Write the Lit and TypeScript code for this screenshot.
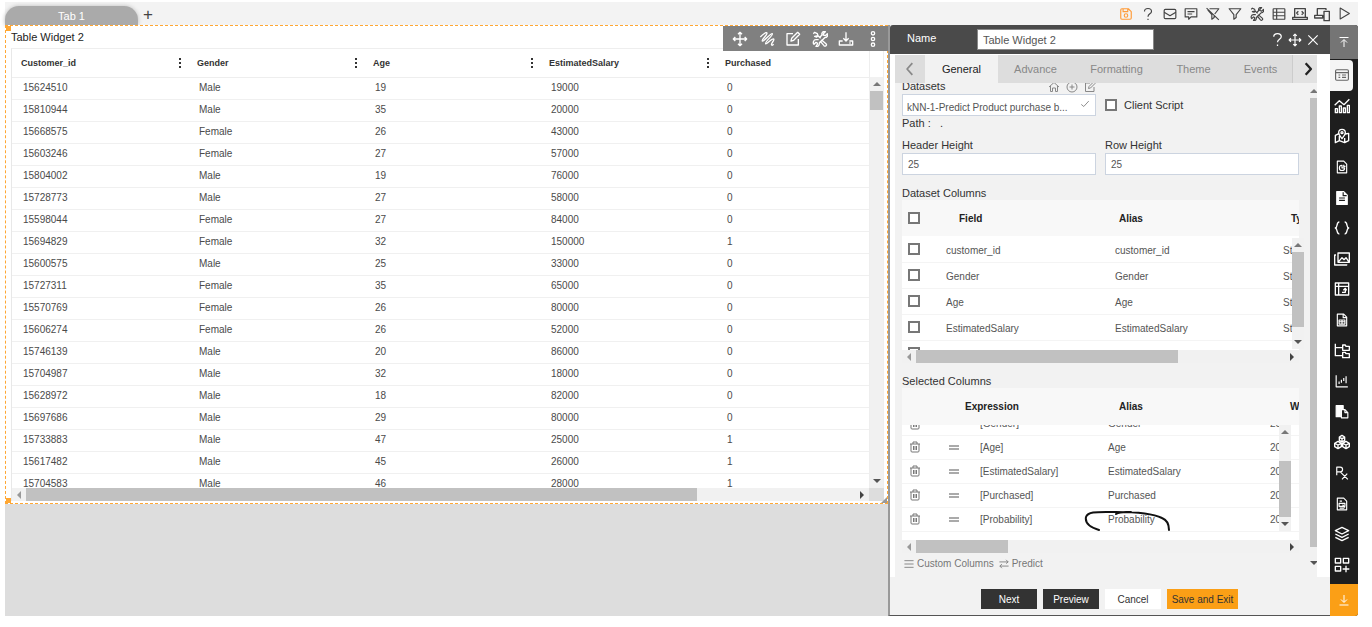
import { LitElement, html, css, svg, nothing, type TemplateResult } from "lit";
import { customElement } from "lit/decorators.js";
import { classMap } from "lit/directives/class-map.js";

type Row = [string, string, string, string, string];

const COLUMNS = ["Customer_id", "Gender", "Age", "EstimatedSalary", "Purchased"];

const ROWS: Row[] = [
  ["15624510", "Male", "19", "19000", "0"],
  ["15810944", "Male", "35", "20000", "0"],
  ["15668575", "Female", "26", "43000", "0"],
  ["15603246", "Female", "27", "57000", "0"],
  ["15804002", "Male", "19", "76000", "0"],
  ["15728773", "Male", "27", "58000", "0"],
  ["15598044", "Female", "27", "84000", "0"],
  ["15694829", "Female", "32", "150000", "1"],
  ["15600575", "Male", "25", "33000", "0"],
  ["15727311", "Female", "35", "65000", "0"],
  ["15570769", "Female", "26", "80000", "0"],
  ["15606274", "Female", "26", "52000", "0"],
  ["15746139", "Male", "20", "86000", "0"],
  ["15704987", "Male", "32", "18000", "0"],
  ["15628972", "Male", "18", "82000", "0"],
  ["15697686", "Male", "29", "80000", "0"],
  ["15733883", "Male", "47", "25000", "1"],
  ["15617482", "Male", "45", "26000", "1"],
  ["15704583", "Male", "46", "28000", "1"],
];

const ICONS: Record<string, TemplateResult> = {
  save: svg`<path d="M3 5a2 2 0 0 1 2-2h11l5 5v11a2 2 0 0 1-2 2H5a2 2 0 0 1-2-2zM7 3v5h8V3"/><circle cx="12" cy="14.5" r="3"/>`,
  help: svg`<path d="M6 7.5C6 4 8.500 2.500 12 2.500s6 1.800 6 5c0 4-6 4.500-6 9M12 20v2.200"/>`,
  mail: svg`<rect x="2" y="4" width="20" height="16" rx="2"/><path d="M2 9l10 6 10-6"/>`,
  comment: svg`<path d="M2 3h20v14H12l-4 4v-4H2zM6 8h12M6 12h8"/>`,
  filterOff: svg`<path d="M1 2l21 20M6 3h16l-7 9M3 5l7 8v8l4-3v-4"/>`,
  filter: svg`<path d="M2 3h20l-8 10v5l-4 3v-8z"/>`,
  tools: svg`<path d="M2 4l2-2 4 2 1 3 4 4M14 13l7 6c1 1 1 2 0 3s-2 1-3 0l-6-7M9 7L7 9 4 8zM10 13l-4 0c-4 0-5 5-3 7l3-3 2 1 0 2-2 3c4 1 5-2 5-5l8-8c4 0 5-3 4-6l-3 3-3-1 0-2 3-3c-4-1-6 2-5 5l-3 3"/>`,
  grid: svg`<rect x="2" y="3" width="20" height="18" rx="1"/><path d="M2 9h20M2 15h20M8 3v18"/>`,
  code: svg`<path d="M4 17V4h16v13M1 17h22v3H1zM9.500 8L7 10.500 9.500 13M14.500 8l2.500 2.500-2.500 2.500"/>`,
  devices: svg`<path d="M5 14V4h13v2M1 14h12v4H1zM15 8h8v14h-8z"/>`,
  play: svg`<path d="M4 2l17 10-17 10z"/>`,
  move: svg`<path d="M12 2v20M2 12h20M9 5l3-3 3 3M9 19l3 3 3-3M5 9l-3 3 3 3M19 9l3 3-3 3"/>`,
  squiggle: svg`<path d="M2 9C6 5 11 1 12 3c1 3-9 10-7 12S18 2 20 4 8 17 10 19s9-9 12-7c2 2-5 7-3 9 1 1 2 0 3-1"/>`,
  edit: svg`<path d="M12 4H3v17h17v-9M9 15l1-4 9-9 3 3-9 9z"/>`,
  download: svg`<path d="M12 2v13M8 11l4 4 4-4M7 15H2v6h20v-6h-5M17 18h2"/>`,
  more: svg`<circle cx="12" cy="3.5" r="2.500"/><circle cx="12" cy="12" r="2.500"/><circle cx="12" cy="20.5" r="2.500"/>`,
  close: svg`<path d="M4 4l16 16M20 4L4 20"/>`,
  toTop: svg`<path d="M3 3h18M12 22V8M6 13l6-6 6 6"/>`,
  toBottom: svg`<path d="M3 22h18M12 2v14M6 11l6 6 6-6"/>`,
  prev: svg`<path d="M16 2L7 12l9 10"/>`,
  next: svg`<path d="M8 2l9 10-9 10"/>`,
  home: svg`<path d="M2 12L12 3l10 9M5 10v11h4v-7h6v7h4V10"/>`,
  plus: svg`<circle cx="12" cy="12" r="10"/><path d="M12 7v10M7 12h10"/>`,
  check: svg`<path d="M3 13l6 5L21 5"/>`,
  menu: svg`<path d="M1 4h22M1 12h22M1 20h22"/>`,
  swap: svg`<path d="M1 7h21M17 2l5 5-5 4M23 17H2M7 12l-5 5 5 5"/>`,
  trash: svg`<path d="M2 6h20M8 6V2h8v4M4 6v14q0 2 2 2h12q2 0 2-2V6M9 10v8M12 10v8M15 10v8"/>`,
  form: svg`<rect x="1" y="3" width="22" height="18" rx="2"/><path d="M1 8h22M6 12h3M12 12h7M6 16h3M12 16h7"/>`,
  chart: svg`<path d="M2 22v-6h3v6zM8 22V12h3v10zM14 22v-7h3v7zM20 22V11h3v11zM1 11l7-7 7 6 8-8"/>`,
  map: svg`<path d="M8 8l-6 3v11l6-3 8 3 6-3V8l-5 1M8 12v7M16 15v7M12 16c-3-4-5-6-5-9a5 5 0 0 1 10 0c0 3-2 5-5 9z"/><circle cx="12" cy="7" r="1.500"/>`,
  fileChart: svg`<path d="M4 2h11l5 5v15H4z"/><path d="M12 9a4.500 4.500 0 1 0 4.500 4.500H12z"/><path d="M15 8v3h3"/>`,
  doc: svg`<path class="solid" d="M3 1h12l6 6v16H3z"/><path class="ink" d="M14 2v6h6M7 12h10M7 16h10"/>`,
  braces: svg`<path d="M8 3C3 3 6 11 2 12c4 1 1 9 6 9M16 3c5 0 2 8 6 9-4 1-1 9-6 9"/>`,
  images: svg`<path d="M6 3h17v14H6zM3 6H1v15h18v-1M7 16l5-6 3 3 3-3 4 6"/>`,
  pivot: svg`<path d="M2 3h20v18H2zM2 8h20M7 3v18M12 17h5v-5M14 14l3-3 2 3"/>`,
  report: svg`<path d="M4 2h11l5 5v15H4zM14 2v6h6M7 12h10v7H7zM7 15h10M12 12v7"/>`,
  tree: svg`<path d="M2 1v18h11M2 7h11M13 3h4l1 2h5v6H13zM13 14h4l1 2h5v6H13z"/>`,
  candles: svg`<path d="M2 2v20h20M7 17v-4M11 15v-5M15 12V7M19 16V4"/>`,
  paste: svg`<path class="solid" d="M2 1h12v6h-4v13H2z"/><path d="M11 8h6l5 5v9H11z"/><path d="M17 8v5h5"/>`,
  cubes: svg`<path d="M12 2l4 2.500v5L12 12 8 9.500v-5zM6 11l5 3v5l-5 3-5-3v-5zM18 11l5 3v5l-5 3-5-3v-5zM8 5l4 2 4-2M12 7v5M1 14l5 2.500 5-2.500M6 16.500V22M13 14l5 2.500 5-2.500M18 16.500V22"/>`,
  rx: svg`<path d="M3 16V2h6a4 4 0 0 1 0 8H3M9 10l13 13M21 13l-9 10"/>`,
  fileSearch: svg`<path d="M4 2h11l5 5v15H4zM8 7h4M7 11h10v5H7zM8 19h8M13 13l4 5"/>`,
  layers: svg`<path d="M12 2l10 5-10 5L2 7zM2 12l10 5 10-5M2 17l10 5 10-5"/>`,
  widgets: svg`<path d="M2 2h8v7H2zM14 2h8v7h-8zM2 14h8v7H2zM18 13v10M13 18h10"/>`,
};

const icon = (name: string, size = 14, weight = 2) => html`
  <svg class="icon" viewBox="0 0 24 24" width=${size} height=${size} stroke-width=${weight} aria-hidden="true">
    ${ICONS[name]}
  </svg>
`;

@customElement("scroll-bar")
export class ScrollBar extends LitElement {
  static properties = {
    vertical: { type: Boolean, reflect: true },
    start: { type: Number },
    size: { type: Number },
  };
  declare vertical: boolean;
  declare start: number;
  declare size: number;

  static styles = css`
    :host { display: flex; align-items: center; background: #f1f1f1; height: 13px; box-sizing: border-box; }
    :host([vertical]) { flex-direction: column; height: auto; width: 13px; }
    .arrow { flex: none; width: 14px; display: flex; justify-content: center; }
    :host([vertical]) .arrow { width: auto; height: 14px; align-items: center; }
    .arrow::before { content: ""; border: 4px solid transparent; }
    .back::before { border-left-width: 0; border-right-color: #999; }
    .forward::before { border-right-width: 0; border-left-color: #444; }
    :host([vertical]) .back::before { border: 4px solid transparent; border-top-width: 0; border-bottom-color: #777; }
    :host([vertical]) .forward::before { border: 4px solid transparent; border-bottom-width: 0; border-top-color: #555; }
    .track { flex: 1; display: flex; align-self: stretch; min-width: 0; min-height: 0; }
    :host([vertical]) .track { flex-direction: column; }
    .thumb { background: #c1c1c1; }
  `;

  render() {
    const side = this.vertical ? "height" : "width";
    return html`
      <span class="arrow back"></span>
      <div class="track">
        <div style="${side}:${this.start ?? 0}%"></div>
        <div class="thumb" style="${side}:${this.size}%"></div>
      </div>
      <span class="arrow forward"></span>
    `;
  }
}

const base = css`
  * { box-sizing: border-box; }
  button { font: inherit; color: inherit; background: none; border: 0; padding: 0; margin: 0; display: flex; align-items: center; justify-content: center; }
  .icon { display: block; fill: none; stroke: currentColor; stroke-linejoin: round; flex: none; }
  .solid { fill: currentColor; }
  .ink { stroke: #1e1e1e; }
  table { border-collapse: collapse; table-layout: fixed; width: 100%; }
  th, td { padding: 0; text-align: left; white-space: nowrap; overflow: hidden; }
`;

@customElement("table-widget")
export class TableWidget extends LitElement {
  static styles = [
    base,
    css`
      :host { display: flex; flex-direction: column; box-sizing: border-box; position: relative; background: #fff; border: 1px dashed #ffa733; padding: 0 3px 2px 5px; height: 479px; }
      .corner { position: absolute; width: 5px; height: 5px; background: #ffa733; left: 0; }
      .top { top: 0; }
      .bottom { bottom: 0; }
      .resize { position: absolute; right: 0; bottom: 0; border: 3px solid #999; border-top-color: transparent; border-left-color: transparent; }
      .title { margin: 0; font-size: 11px; font-weight: 400; line-height: 22px; color: #222; }
      .tools { position: absolute; top: 0; right: -1px; width: 165px; height: 25px; padding: 0 2px 0 4px; display: flex; background: #808080; color: #fff; }
      .tools button { flex: 1; }
      .frame { flex: 1; min-height: 0; display: grid; grid-template-columns: 1fr 15px; grid-template-rows: 1fr 13px; border-left: 1px solid #e8e8e8; border-top: 1px solid #eee; }
      .view { overflow: hidden; min-height: 0; }
      th { height: 28px; padding: 0 9px; border-bottom: 1px solid #eee; font-size: 9px; color: #333; }
      .head { display: flex; align-items: center; justify-content: space-between; }
      .head button { width: 5px; height: 12px; margin-right: -3px; }
      .dots { width: 2px; height: 2px; background: #333; box-shadow: 0 -4px #333, 0 4px #333; }
      td { height: 22px; padding: 0 11px 1px; border-bottom: 1px solid #f0f0f0; font-size: 10px; color: #4a4a4a; }
      .side { display: flex; flex-direction: column; border-left: 1px solid #eee; border-right: 1px solid #eee; }
      .side scroll-bar { flex: 1; margin-top: 28px; }
      .cap { background: #ddd; }
    `,
  ];

  render() {
    const tools = [["move", "Move"], ["squiggle", "Link"], ["edit", "Edit"], ["tools", "Settings"], ["download", "Download"], ["more", "More"]];
    return html`
      <h2 class="title">Table Widget 2</h2>
      <div class="frame">
        <div class="view">
          <table>
            <colgroup>
              ${COLUMNS.map((_, i) => html`<col style=${i < 4 ? "width:176px" : nothing} />`)}
            </colgroup>
            <thead>
              <tr>
                ${COLUMNS.map((c, i) => html`<th scope="col"><div class="head">${c}${i < 4
                  ? html`<button aria-label="Column menu"><span class="dots"></span></button>` : nothing}</div></th>`)}
              </tr>
            </thead>
            <tbody>
              ${ROWS.map((r) => html`<tr>${r.map((v) => html`<td>${v}</td>`)}</tr>`)}
            </tbody>
          </table>
        </div>
        <div class="side"><scroll-bar vertical .size=${5}></scroll-bar></div>
        <scroll-bar .size=${81}></scroll-bar>
        <div class="cap"></div>
      </div>
      <div class="tools">${tools.map(([n, l]) => html`<button aria-label=${l}>${icon(n, 16)}</button>`)}</div>
      <span class="corner top"></span>
      <span class="corner bottom"></span>
      <span class="resize"></span>
    `;
  }
}

@customElement("config-panel")
export class ConfigPanel extends LitElement {
  static styles = [
    base,
    css`
      :host { display: flex; flex-direction: column; box-sizing: border-box; background: #f2f2f2; border-left: 2px solid #999; border-bottom: 1px solid #555; font-size: 11px; color: #333; min-height: 0; }
      .bar { flex: none; height: 29px; display: flex; align-items: center; background: #4a4a4a; color: #fff; padding: 0 8px 0 17px; border-radius: 3px 0 0 0; }
      .bar label { width: 70px; margin-bottom: 4px; }
      .bar input { width: 177px; height: 21px; border-color: #888; margin-right: auto; }
      .bar button { width: 18px; }
      input:not([type]) { font-family: inherit; font-size: 10px; color: #555; background: #fff; border: 1px solid #ccd4e0; padding: 0 5px; min-width: 0; }
      .bar input:not([type]) { font-size: 11px; border-color: #888; }
      .main { flex: 1; min-height: 0; display: flex; flex-direction: column; background: #f2f2f2; border: solid #fff; border-width: 1px 13px 0 5px; }
      .tabs { flex: none; display: flex; height: 28px; background: #ddd; color: #888; }
      .tabs .arrow { width: 30px; }
      .tabs .last { width: 25px; color: #222; margin-left: auto; border-left: 1px solid #ccc; background: #e2e2e2; padding-left: 5px; }
      .tab.general { width: 73px; background: #f2f2f2; color: #222; }
      .tab.advance { width: 75px; }
      .tab.formatting { width: 87px; }
      .tab.theme { width: 67px; }
      .tab.events { flex: 1; padding-left: 2px; }
      .scroll { flex: 1; min-height: 0; overflow: hidden; display: flex; }
      .content { flex: 1; min-width: 0; padding: 0 11px 0 7px; margin-top: -4px; }
      .pair { display: grid; grid-template-columns: 1fr 1fr; gap: 0 9px; }
      .label { display: flex; line-height: 15px; align-items: center; }
      .label .acts { margin-left: auto; display: flex; gap: 6px; color: #888; }
      .field { display: flex; flex-direction: column; position: relative; }
      .field input, select { height: 22px; width: 100%; }
      select { appearance: none; font: inherit; font-size: 10px; line-height: 14px; color: #555; background: #fff; border: 1px solid #ccd4e0; border-radius: 0; padding: 5px 4px 0; margin: 0; }
      .tick { position: absolute; right: 6px; bottom: 7px; color: #777; pointer-events: none; }
      .client { display: flex; align-items: center; gap: 7px; padding-top: 15px; }
      input[type="checkbox"] { appearance: none; display: block; width: 12px; height: 12px; margin: 0; border: 2px solid #777; background: #fff; }
      .path { margin: 0; line-height: 14px; padding-bottom: 8px; height: 22px; }
      .section { margin: 11px 0 0; font-size: 11px; font-weight: 400; line-height: 14px; }
      .scroll > scroll-bar { width: 7px; overflow: hidden; margin: 1px 0 7px; }
      .grid { position: relative; height: 150px; }
      .clip { height: 100%; overflow: hidden; background: #fff; }
      .chosen { height: 152px; }
      .v { position: absolute; width: 12px; right: -5px; top: 38px; bottom: 1px; }
      .chosen .v { right: 8px; top: 37px; bottom: 9px; }
      th { height: 36px; background: #f8f8f8; font-size: 10px; color: #222; }
      .chosen th { height: 37px; }
      td { height: 26px; font-size: 10px; color: #555; border-bottom: 1px solid #f4f4f4; }
      .dataset td { padding-top: 3px; }
      .dataset .tickcell { padding-top: 0; }
      .chosen td { height: 24px; }
      .tickcell { padding-left: 6px; }
      .fields { padding-left: 13px; }
      .alias { padding-left: 4px; }
      .chosen .name { padding-left: 15px; }
      .chosen .alias { padding-left: 10px; }
      .chosen .icon { color: #777; }
      .grip { display: block; width: 10px; height: 5px; border: solid #aaa; border-width: 2px 0; }
      .part { height: 9px; overflow: hidden; display: flex; flex-direction: column; justify-content: flex-end; }
      .part span { flex: none; height: 16px; }
      .chosen .cut td { height: 10px; }
      .mark { position: absolute; left: 182px; top: 122px; width: 88px; height: 21px; fill: none; stroke: #111; stroke-width: 2; stroke-linecap: round; }
      .links { display: flex; gap: 5px; padding: 5px 2px; color: #777; font-size: 10px; }
      .links button { gap: 3px; }
      .foot { flex: none; height: 38px; display: flex; gap: 6px; padding: 12px 0 0 91px; font-size: 10px; }
      .foot button { width: 56px; height: 20px; background: #fff; }
      .foot .dark { background: #333; color: #fff; }
      .foot .accent { width: 71px; background: #fb9f16; }
    `,
  ];

  private datasetTable() {
    const fields = ["customer_id", "Gender", "Age", "EstimatedSalary", ""];
    return html`
      <div class="grid dataset">
        <div class="clip"><table>
          <colgroup><col style="width:31px" /><col style="width:178px" /><col style="width:168px" /><col /></colgroup>
          <thead>
            <tr>
              <th class="tickcell"><input type="checkbox" aria-label="Select all fields" /></th>
              <th scope="col" style="padding-left:26px">Field</th>
              <th scope="col" style="padding-left:8px">Alias</th>
              <th scope="col" style="padding-left:12px">Type</th>
            </tr>
          </thead>
          <tbody>
            ${fields.map((f) => html`<tr>
              <td class="tickcell"><input type="checkbox" aria-label="Select ${f}" /></td>
              <td class="fields">${f}</td><td class="alias">${f}</td><td class="alias">${f ? "String" : nothing}</td>
            </tr>`)}
          </tbody>
        </table></div>
        <scroll-bar class="v" vertical .size=${90}></scroll-bar>
      </div>
      <scroll-bar .size=${71}></scroll-bar>
    `;
  }

  private chosenTable() {
    const fields = ["Gender", "Age", "EstimatedSalary", "Purchased", "Probability"];
    const cell = (v: unknown, cut: boolean) => (cut ? html`<div class="part"><span>${v}</span></div>` : v);
    return html`
      <div class="grid chosen">
        <div class="clip"><table>
          <colgroup><col style="width:47px" /><col style="width:16px" /><col style="width:133px" /><col style="width:172px" /><col /></colgroup>
          <thead>
            <tr>
              <th></th><th></th>
              <th scope="col">Expression</th>
              <th scope="col" style="padding-left:21px">Alias</th>
              <th scope="col" style="padding-left:20px">Width</th>
            </tr>
          </thead>
          <tbody>
            ${fields.map((f, i) => html`<tr class=${classMap({ cut: i === 0 })}>
              <td style="padding-left:7px">${cell(icon("trash", 12), i === 0)}</td>
              <td>${i === 0 ? nothing : html`<span class="grip"></span>`}</td>
              <td class="name">${cell(`[${f}]`, i === 0)}</td>
              <td class="alias">${cell(f, i === 0)}</td>
              <td>${cell("200", i === 0)}</td>
            </tr>`)}
          </tbody>
        </table></div>
        <scroll-bar class="v" vertical .start=${28} .size=${72}></scroll-bar>
        <svg class="mark" viewBox="0 0 88 21"><path d="M15 20C5 17 1 12 2 7c2-6 12-5 30-5 20 0 38 2 46 6 5 2 7 6 7 12M32 4c5-3 10-2 15-2" /></svg>
      </div>
      <scroll-bar .size=${25}></scroll-bar>
    `;
  }

  render() {
    return html`
      <div class="bar">
        <label for="name">Name</label>
        <input id="name" .value=${"Table Widget 2"} />
        <button aria-label="Help">${icon("help", 15)}</button>
        <button aria-label="Move">${icon("move", 14)}</button>
        <button aria-label="Close">${icon("close", 14)}</button>
      </div>
      <div class="main">
        <div class="tabs">
          <button class="arrow" aria-label="Previous tabs">${icon("prev", 14, 3)}</button>
          ${["General", "Advance", "Formatting", "Theme", "Events"].map(
            (t) => html`<button class="tab ${t.toLowerCase()}">${t}</button>`,
          )}
          <button class="last" aria-label="Next tabs">${icon("next", 14, 4)}</button>
        </div>
        <div class="scroll">
          <div class="content">
            <div class="pair">
              <div class="field">
                <div class="label">
                  <label for="dataset">Datasets</label>
                  <span class="acts">
                    <button aria-label="Home">${icon("home", 12)}</button>
                    <button aria-label="Add">${icon("plus", 12)}</button>
                    <button aria-label="Edit">${icon("edit", 12)}</button>
                  </span>
                </div>
                <select id="dataset"><option>kNN-1-Predict Product purchase b...</option></select>
                <span class="tick">${icon("check", 10)}</span>
              </div>
              <div class="client">
                <input type="checkbox" id="client" /><label for="client">Client Script</label>
              </div>
            </div>
            <p class="path">Path : &nbsp; .</p>
            <div class="pair">
              <div class="field"><label class="label" for="hh">Header Height</label><input id="hh" .value=${"25"} /></div>
              <div class="field"><label class="label" for="rh">Row Height</label><input id="rh" .value=${"25"} /></div>
            </div>
            <h3 class="section">Dataset Columns</h3>
            ${this.datasetTable()}
            <h3 class="section">Selected Columns</h3>
            ${this.chosenTable()}
            <div class="links">
              <button>${icon("menu", 10)}Custom Columns</button>
              <button>${icon("swap", 10)}Predict</button>
            </div>
          </div>
          <scroll-bar vertical .size=${98}></scroll-bar>
        </div>
      </div>
      <div class="foot">
        <button class="dark">Next</button>
        <button class="dark">Preview</button>
        <button>Cancel</button>
        <button class="accent">Save and Exit</button>
      </div>
    `;
  }
}

@customElement("app-root")
export class AppRoot extends LitElement {
  static styles = [
    base,
    css`
      :host { display: flex; flex-direction: column; box-sizing: border-box; height: 100vh; padding: 2px 14px 11px 5px; background: #fff; font-family: "Liberation Sans", Arial, sans-serif; overflow: hidden; }
      .top { flex: none; height: 23px; display: flex; align-items: flex-end; background: #f3f3f3; color: #444; }
      .tab { width: 133px; height: 19px; background: #aaa; color: #fff; font-size: 11px; border-radius: 14px 14px 0 0; box-shadow: 0 0 4px #bbb; }
      .add { width: 20px; height: 21px; font-size: 17px; }
      .actions { margin-left: auto; width: 240px; height: 23px; display: flex; margin-right: 3px; }
      .actions button { flex: 1; }
      .actions .hot { color: #ff9c3a; }
      .body { flex: 1; min-height: 0; display: grid; grid-template-columns: 1fr 442px 28px; }
      .canvas { background: #ddd; min-width: 0; }
      .rail { display: flex; flex-direction: column; background: #1e1e1e; color: #fff; border-radius: 0 3px 3px 0; overflow: hidden; }
      .cap { flex: none; height: 34px; background: #757575; color: #fff; }
      .end { height: 32px; background: #fb9f16; }
      .list { flex: 1; min-height: 0; display: flex; flex-direction: column; padding: 1px 5px 4px 0; }
      .list button { flex: 1; min-height: 0; }
      .list .on { background: #f5f5f5; color: #666; border-radius: 0 4px 4px 0; }
    `,
  ];

  render() {
    const actions = ["save", "help", "mail", "comment", "filterOff", "filter", "tools", "grid", "code", "devices", "play"];
    const rail = ["form", "chart", "map", "fileChart", "doc", "braces", "images", "pivot", "report", "tree", "candles", "paste", "cubes", "rx", "fileSearch", "layers", "widgets"];
    const small = new Set(["form", "fileChart", "doc", "report", "paste", "fileSearch", "rx", "candles"]);
    return html`
      <header class="top">
        <button class="tab">Tab 1</button>
        <button class="add" aria-label="Add tab">+</button>
        <div class="actions">
          ${actions.map((n, i) => html`<button class=${classMap({ hot: i === 0 })} aria-label=${n}>
            ${icon(n, n === "code" || n === "devices" ? 16 : n === "play" ? 13 : 14)}
          </button>`)}
        </div>
      </header>
      <div class="body">
        <main class="canvas"><table-widget></table-widget></main>
        <config-panel></config-panel>
        <nav class="rail">
          <button class="cap" aria-label="Collapse">${icon("toTop", 12)}</button>
          <div class="list">
            ${rail.map((n, i) => html`<button class=${classMap({ on: i === 0 })} aria-label=${n}>
              ${icon(n, small.has(n) ? 14 : 16)}
            </button>`)}
          </div>
          <button class="cap end" aria-label="Expand">${icon("toBottom", 12)}</button>
        </nav>
      </div>
    `;
  }
}
